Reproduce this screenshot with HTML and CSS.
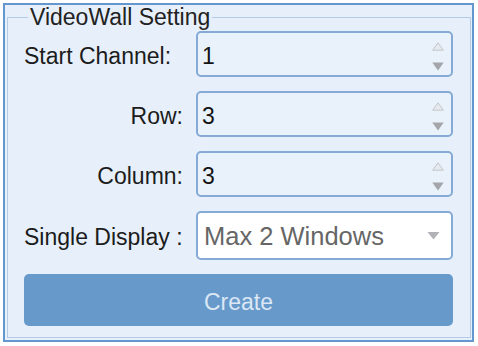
FILE: index.html
```html
<!DOCTYPE html>
<html>
<head>
<meta charset="utf-8">
<link rel="stylesheet" href="styles.css">
</head>
<body>
<div class="panel">
  <fieldset class="group">
    <legend class="legend">VideoWall Setting</legend>
    <div class="form">
      <div class="label label-left">Start Channel:</div>
      <div class="spin">
        <span class="value">1</span>
        <div class="arrows">
          <svg class="up" width="12" height="9" viewBox="0 0 12 9"><polygon points="6,0.8 11.3,8.2 0.7,8.2" fill="#e6e9ed" stroke="#c3c6ca" stroke-width="1"/></svg>
          <svg class="down" width="12" height="9" viewBox="0 0 12 9"><polygon points="0.3,0.5 11.7,0.5 6,8.5" fill="#a4a6a9"/></svg>
        </div>
      </div>

      <div class="label">Row:</div>
      <div class="spin">
        <span class="value">3</span>
        <div class="arrows">
          <svg class="up" width="12" height="9" viewBox="0 0 12 9"><polygon points="6,0.8 11.3,8.2 0.7,8.2" fill="#e6e9ed" stroke="#c3c6ca" stroke-width="1"/></svg>
          <svg class="down" width="12" height="9" viewBox="0 0 12 9"><polygon points="0.3,0.5 11.7,0.5 6,8.5" fill="#a4a6a9"/></svg>
        </div>
      </div>

      <div class="label">Column:</div>
      <div class="spin">
        <span class="value">3</span>
        <div class="arrows">
          <svg class="up" width="12" height="9" viewBox="0 0 12 9"><polygon points="6,0.8 11.3,8.2 0.7,8.2" fill="#e6e9ed" stroke="#c3c6ca" stroke-width="1"/></svg>
          <svg class="down" width="12" height="9" viewBox="0 0 12 9"><polygon points="0.3,0.5 11.7,0.5 6,8.5" fill="#a4a6a9"/></svg>
        </div>
      </div>

      <div class="label label-display">Single Display :</div>
      <div class="select">
        <span class="select-text">Max 2 Windows</span>
        <svg class="caret" width="13" height="9" viewBox="0 0 13 9"><polygon points="0.5,1 12.5,1 6.5,8.5" fill="#b0b2b5"/></svg>
      </div>

      <div class="button">Create</div>
    </div>
  </fieldset>
</div>
</body>
</html>
```

FILE: styles.css
```css
html, body {
  margin: 0;
  padding: 0;
  background: #ffffff;
}

body {
  font-family: "Liberation Sans", Arial, sans-serif;
  color: #1c1c1c;
}

.panel {
  box-sizing: border-box;
  width: 471px;
  height: 339px;
  margin: 3px 0 0 3px;
  border: 2px solid #6497cd;
  background: #e7f0fa;
  padding: 1px 1px 0 2px;
}

.group {
  margin: 0;
  padding: 3px 16px 11px 16px;
  border: 1px solid #b3cbe6;
  min-width: 0;
}

.legend {
  margin-left: 4px;
  padding: 0 2px;
  font-size: 23px;
  line-height: 22px;
  color: #222222;
}

.form {
  display: grid;
  grid-template-columns: 161px 257px;
  column-gap: 11px;
  row-gap: 14px;
  align-items: center;
}

.label {
  font-size: 23px;
  line-height: 26px;
  padding-top: 4px;
  text-align: right;
  padding-right: 2px;
  white-space: nowrap;
}

.label-left {
  text-align: left;
}

.label-display {
  text-align: left;
  padding-top: 2px;
  padding-right: 0;
}

.spin {
  box-sizing: border-box;
  height: 46px;
  border: 2px solid #85aad6;
  border-radius: 5px;
  background: #e9f2fb;
  display: flex;
  align-items: center;
}

.value {
  flex: 1;
  font-size: 23px;
  line-height: 26px;
  padding: 4px 0 0 4px;
  color: #141414;
}

.arrows {
  align-self: flex-start;
  display: flex;
  flex-direction: column;
  gap: 11px;
  padding-top: 9px;
  margin-right: 7px;
}

.arrows svg {
  display: block;
}

.select {
  box-sizing: border-box;
  height: 49px;
  border: 2px solid #85aad6;
  border-radius: 5px;
  background: #ffffff;
  display: flex;
  align-items: center;
}

.select-text {
  flex: 1;
  font-size: 25.5px;
  line-height: 30px;
  padding-left: 6px;
  color: #666666;
}

.caret {
  display: block;
  margin-right: 11px;
}

.button {
  grid-column: 1 / 3;
  height: 52px;
  box-sizing: border-box;
  border-radius: 5px;
  background: #6799cb;
  color: #dbe7f4;
  font-size: 23px;
  line-height: 26px;
  padding-top: 4px;
  display: flex;
  align-items: center;
  justify-content: center;
}
```
